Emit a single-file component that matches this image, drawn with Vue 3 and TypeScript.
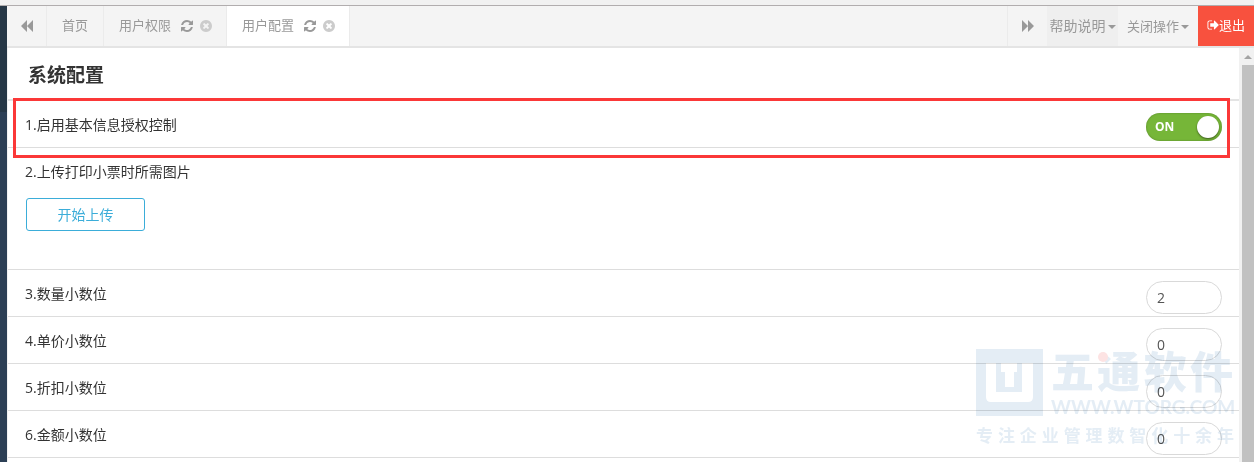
<script setup lang="ts">
import { reactive, ref } from 'vue'

interface Tab {
  id: string
  title: string
  closable: boolean
}

interface DecimalSetting {
  id: string
  label: string
  value: string
}

const tabs = ref<Tab[]>([
  { id: 'home', title: '首页', closable: false },
  { id: 'permission', title: '用户权限', closable: true },
  { id: 'config', title: '用户配置', closable: true },
])
const activeTab = ref('config')
const authEnabled = ref(true)

const decimals = reactive<DecimalSetting[]>([
  { id: 'quantity', label: '3.数量小数位', value: '2' },
  { id: 'price', label: '4.单价小数位', value: '0' },
  { id: 'discount', label: '5.折扣小数位', value: '0' },
  { id: 'amount', label: '6.金额小数位', value: '0' },
])

function closeTab(id: string) {
  tabs.value = tabs.value.filter((t) => t.id !== id)
}
</script>

<template>
  <div class="page">
    <div class="topline"></div>
    <div class="body">
      <aside class="sidebar"></aside>
      <div class="main">
        <nav class="tabbar">
          <button class="scroll-btn back" type="button" aria-label="向左">
            <svg width="14" height="14" viewBox="0 0 14 14"><path d="M7 1v12L1 7zM13 1v12L7 7z" /></svg>
          </button>
          <div v-for="tab in tabs" :key="tab.id" class="tab" :class="{ active: tab.id === activeTab }">
            <button class="tab-title" type="button" @click="activeTab = tab.id">{{ tab.title }}</button>
            <template v-if="tab.closable">
              <button class="icon-btn" type="button" aria-label="刷新">
                <svg width="14" height="14" viewBox="0 0 1792 1792"><path d="M1639 1056q0 5-1 7-64 268-268 434.5t-478 166.5q-146 0-282.5-55t-243.5-157l-129 129q-19 19-45 19t-45-19-19-45v-448q0-26 19-45t45-19h448q26 0 45 19t19 45-19 45l-137 137q71 66 161 102t187 36q134 0 250-65t186-179q11-17 53-117 8-23 30-23h192q13 0 22.5 9.5t9.5 22.5zm25-800v448q0 26-19 45t-45 19h-448q-26 0-45-19t-19-45 19-45l138-138q-148-137-349-137-134 0-250 65t-186 179q-11 17-53 117-8 23-30 23h-199q-13 0-22.5-9.5t-9.5-22.5v-7q65-268 270-434.5t480-166.5q146 0 284 55.5t245 156.5l130-129q19-19 45-19t45 19 19 45z" /></svg>
              </button>
              <button class="icon-btn close" type="button" aria-label="关闭" @click="closeTab(tab.id)">
                <svg width="14" height="14" viewBox="0 0 1792 1792"><path d="M1277 1122q0-26-19-45l-181-181 181-181q19-19 19-45 0-27-19-46l-90-90q-19-19-46-19-26 0-45 19l-181 181-181-181q-19-19-45-19-27 0-46 19l-90 90q-19 19-19 46 0 26 19 45l181 181-181 181q-19 19-19 45 0 27 19 46l90 90q19 19 46 19 26 0 45-19l181-181 181 181q19 19 45 19 27 0 46-19l90-90q19-19 19-46zm387-226q0 209-103 385.5t-279.5 279.5-385.5 103-385.5-103-279.5-279.5-103-385.5 103-385.5 279.5-279.5 385.5-103 385.5 103 279.5 279.5 103 385.5z" /></svg>
              </button>
            </template>
          </div>
          <div class="tabbar-right">
            <button class="scroll-btn forward" type="button" aria-label="向右">
              <svg width="14" height="14" viewBox="0 0 14 14"><path d="M1 1v12l6-6zM7 1v12l6-6z" /></svg>
            </button>
            <button class="menu help" type="button">帮助说明<i class="caret"></i></button>
            <button class="menu ops" type="button">关闭操作<i class="caret"></i></button>
            <button class="exit" type="button">
              <svg width="12" height="12" viewBox="0 128 1664 1536"><path d="M704 1440q0 4 1 20t.5 26.5-3 23.5-10 19.5-20.5 6.5h-320q-119 0-203.5-84.5t-84.5-203.5v-704q0-119 84.5-203.5t203.5-84.5h320q13 0 22.5 9.5t9.5 22.5q0 4 1 20t.5 26.5-3 23.5-10 19.5-20.5 6.5h-320q-66 0-113 47t-47 113v704q0 66 47 113t113 47h312l11.5 1 11.5 3 8 5.5 7 9 2 13.5zm928-544q0 26-19 45l-544 544q-19 19-45 19t-45-19-19-45v-288h-448q-26 0-45-19t-19-45v-384q0-26 19-45t45-19h448v-288q0-26 19-45t45-19 45 19l544 544q19 19 19 45z" /></svg>退出
            </button>
          </div>
        </nav>

        <div class="viewport">
          <main class="content">
            <h1>系统配置</h1>
            <section class="row first">
              <label for="auth">1.启用基本信息授权控制</label>
              <span class="switch">
                <input id="auth" v-model="authEnabled" type="checkbox" role="switch" />
                <span class="track" :class="{ off: !authEnabled }">
                  <span class="state">{{ authEnabled ? 'ON' : 'OFF' }}</span>
                  <span class="knob"></span>
                </span>
              </span>
              <span class="highlight"></span>
            </section>
            <section class="row upload">
              <span class="caption">2.上传打印小票时所需图片</span>
              <button class="upload-btn" type="button">开始上传</button>
            </section>
            <section v-for="item in decimals" :key="item.id" class="row">
              <label :for="item.id">{{ item.label }}</label>
              <input :id="item.id" v-model="item.value" class="num" type="text" />
            </section>
          </main>
          <div class="scrollbar">
            <span class="arrow"></span>
            <span class="thumb"></span>
          </div>
        </div>
      </div>
    </div>

    <div class="watermark">
      <div class="brand">
        <svg class="logo" width="67" height="67" viewBox="0 0 67 67">
          <path fill-rule="evenodd" d="M0 0h67v67H0zM10 14v34q0 5 5 5h37q5 0 5-5V14H46v29H20V14z" />
          <path class="cut" d="M25 14h16v9h-3v15h-9V23h-4z" />
        </svg>
        <div class="names">
          <div class="cn">五通软件</div>
          <div class="site">WWW.WTORG.COM</div>
          <span class="dot"></span>
        </div>
      </div>
      <div class="slogan">专注企业管理数智化十余年</div>
    </div>
  </div>
</template>

<style>
html,
body,
#app {
  height: 100%;
}
body {
  margin: 0;
  overflow: hidden;
}
</style>

<style scoped>
.page {
  position: relative;
  display: flex;
  flex-direction: column;
  height: 100%;
  overflow: hidden;
  background: #fff;
  color: #333;
  font: 14px/20px "Open Sans", "Noto Sans CJK SC", sans-serif;
}
button {
  margin: 0;
  padding: 0;
  border: 0;
  background: none;
  color: inherit;
  font: inherit;
  cursor: pointer;
}
svg {
  display: block;
  flex: none;
  fill: currentColor;
}
.topline {
  flex: none;
  height: 5px;
  background: #f1f1f1;
  border-bottom: 1px solid #b1adae;
}
.body {
  flex: 1;
  display: flex;
  min-height: 0;
}
.sidebar {
  flex: none;
  width: 7px;
  background: linear-gradient(#263746 106px, #2c3f55 106px);
}
.main {
  flex: 1;
  min-width: 0;
  display: flex;
  flex-direction: column;
}
.tabbar {
  flex: none;
  display: flex;
  height: 40px;
  background: #f4f4f4;
  border-bottom: 2px solid #e4e4e4;
  color: #999;
  font-size: 13px;
}
.scroll-btn {
  display: flex;
  align-items: center;
  justify-content: center;
  width: 40px;
  box-sizing: border-box;
  border-right: 1px solid #ebebeb;
}
.forward {
  border-right: 0;
  border-left: 1px solid #ebebeb;
}
.tab {
  display: flex;
  align-items: center;
  padding: 0 15px;
  border-right: 1px solid #ebebeb;
}
.tab.active {
  background: #fff;
}
.tab-title {
  height: 40px;
  padding-bottom: 2px;
}
.icon-btn {
  margin-left: 9px;
  padding-bottom: 1px;
}
.icon-btn.close {
  margin-left: 5px;
  margin-right: -2px;
  color: #ccc;
}
.tabbar-right {
  display: flex;
  margin-left: auto;
}
.menu {
  display: flex;
  align-items: center;
  justify-content: center;
  gap: 2px;
}
.help {
  width: 71px;
  background: #efefef;
  font-size: 14px;
}
.ops {
  width: 80px;
}
.caret {
  border: 4px solid transparent;
  border-top-color: currentColor;
  border-bottom: 0;
  margin-top: 2px;
}
.exit {
  display: flex;
  align-items: center;
  justify-content: center;
  width: 56px;
  padding-bottom: 2px;
  background: #f8513e;
  color: #fff;
}
.viewport {
  flex: 1;
  min-height: 0;
  display: flex;
  background: #f1f1f1;
}
.content {
  flex: 1;
  min-width: 0;
  margin-left: 1px;
  background: #fff;
}
h1 {
  margin: 0;
  padding: 14px 20px 10px;
  border-bottom: 2px solid #e4e4e4;
  font-size: 19px;
  line-height: 27px;
  font-weight: 700;
}
.row {
  position: relative;
  display: flex;
  justify-content: space-between;
  align-items: flex-start;
  height: 46px;
  padding: 0 17px;
  border-bottom: 1px solid #ddd;
  line-height: 47px;
}
.upload {
  flex-direction: column;
  justify-content: flex-start;
  height: 121px;
}
.upload-btn {
  width: 119px;
  height: 33px;
  margin-left: 1px;
  margin-top: 3px;
  border: 1px solid #3badd9;
  border-radius: 3px;
  color: #3badd9;
  line-height: 31px;
}
.num {
  box-sizing: border-box;
  width: 76px;
  height: 33px;
  margin-top: 11px;
  padding: 0 10px;
  border: 1px solid #d9d9d9;
  border-radius: 17px;
  background: #fff;
  color: #555;
  font: inherit;
  line-height: 31px;
}
.switch {
  position: relative;
  display: block;
  width: 76px;
  height: 28px;
  margin-top: 12px;
}
.switch input {
  position: absolute;
  inset: 0;
  z-index: 1;
  width: 100%;
  height: 100%;
  margin: 0;
  opacity: 0;
  cursor: pointer;
}
.track {
  display: flex;
  align-items: center;
  justify-content: space-between;
  height: 28px;
  box-sizing: border-box;
  padding: 0 3px 0 9px;
  border-radius: 14px;
  background: #76b638;
  box-shadow: inset 0 0 2px rgba(0, 0, 0, 0.3);
}
.track.off {
  flex-direction: row-reverse;
  padding: 0 9px 0 3px;
  background: #bbb;
}
.state {
  color: #fff;
  font-size: 12px;
  line-height: 28px;
  font-weight: 700;
}
.knob {
  width: 22px;
  height: 22px;
  border-radius: 50%;
  background: #fff;
  box-shadow: 0 1px 2px rgba(0, 0, 0, 0.5);
}
.highlight {
  position: absolute;
  z-index: 2;
  top: -3px;
  right: 9px;
  bottom: -11px;
  left: 5px;
  border: 3px solid #fb3838;
  pointer-events: none;
}
.scrollbar {
  flex: none;
  width: 15px;
  box-sizing: border-box;
  padding-left: 3px;
  display: flex;
  flex-direction: column;
  align-items: center;
}
.arrow {
  margin: 7px 0 6px;
  border: 4px solid transparent;
  border-bottom-color: #a3a3a3;
  border-top: 0;
}
.thumb {
  flex: 1;
  width: 100%;
  background: #c1c1c1;
}
.watermark {
  position: absolute;
  right: 20px;
  bottom: 14px;
  width: 258px;
  color: #e4edf5;
  mix-blend-mode: multiply;
  pointer-events: none;
}
.brand {
  display: flex;
  gap: 8px;
}
.cut {
  fill: #fff;
}
.names {
  position: relative;
  width: 182px;
}
.cn {
  font-size: 43px;
  line-height: 46px;
  font-weight: 900;
  text-align-last: justify;
}
.site {
  font-family: Lato, sans-serif;
  font-size: 19px;
  line-height: 24px;
  font-weight: 700;
  white-space: nowrap;
}
.dot {
  position: absolute;
  top: 3px;
  left: 47px;
  width: 10px;
  height: 10px;
  border-radius: 50%;
  background: #fde3e3;
}
.slogan {
  margin-top: 5px;
  font-size: 17px;
  line-height: 24px;
  font-weight: 700;
  text-align-last: justify;
}
</style>
